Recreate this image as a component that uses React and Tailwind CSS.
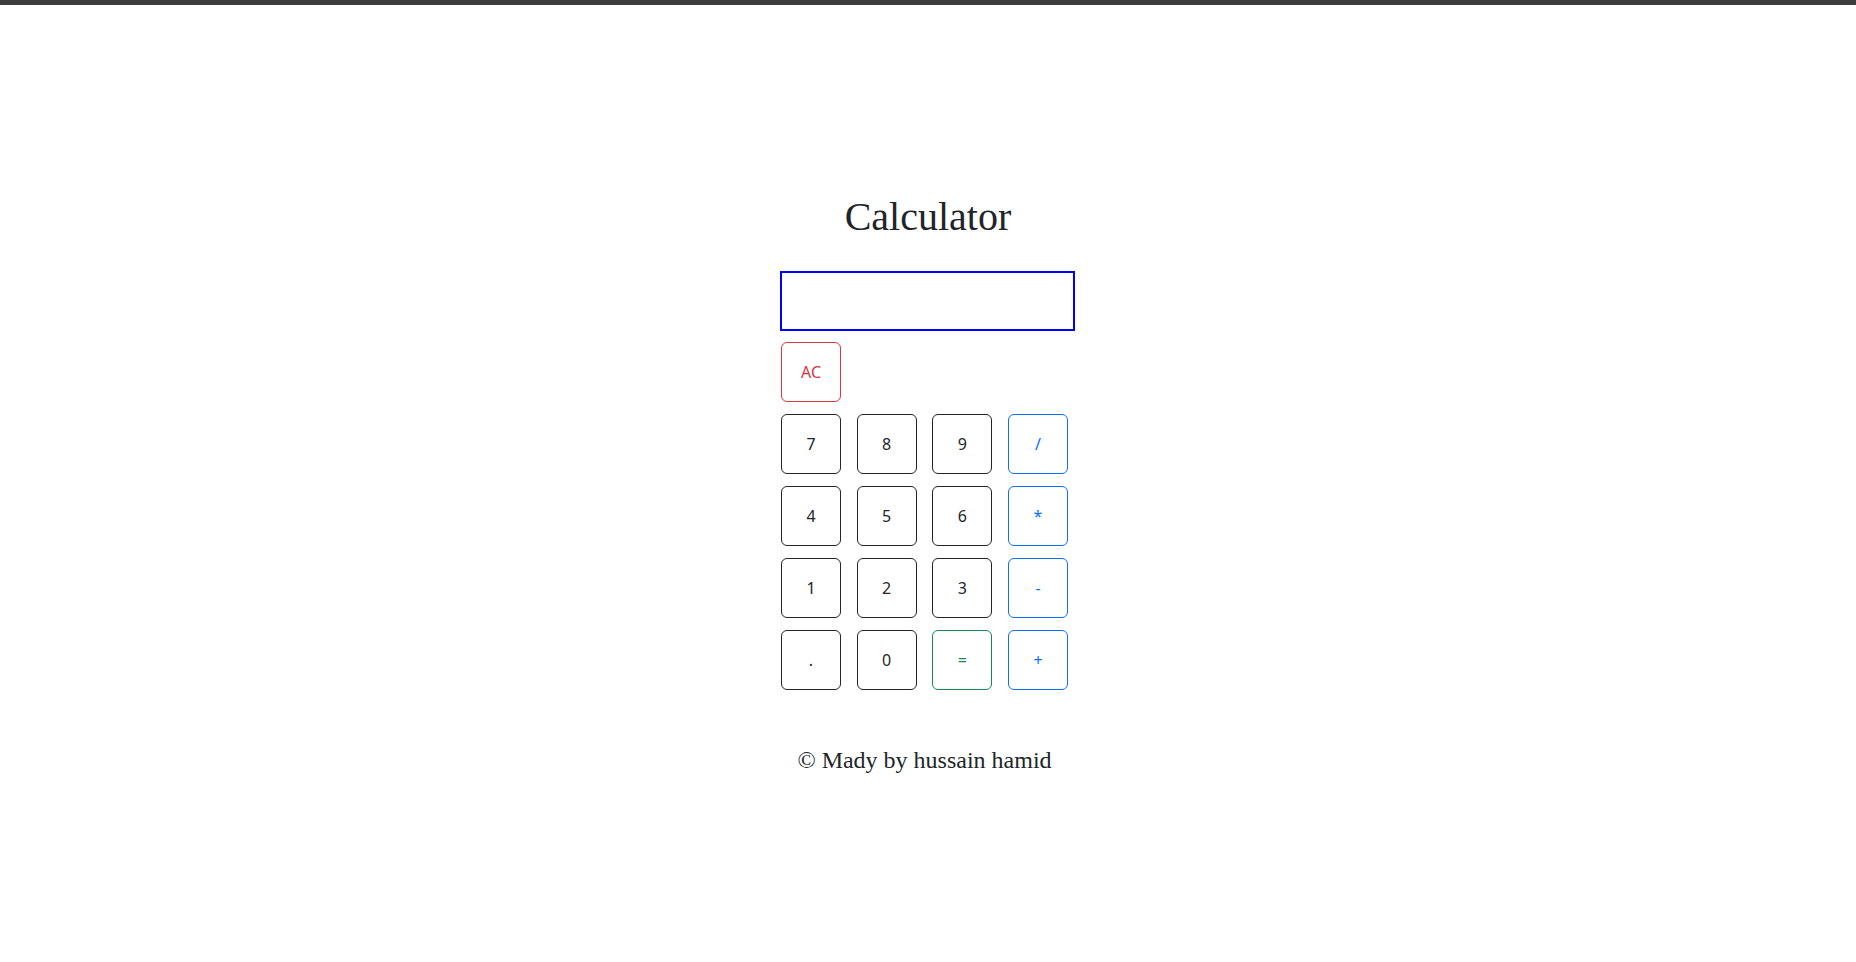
export default function App() {
  const rows = [
    [
      { t: "7" },
      { t: "8" },
      { t: "9" },
      { t: "/", k: "op" },
    ],
    [
      { t: "4" },
      { t: "5" },
      { t: "6" },
      { t: "*", k: "op" },
    ],
    [
      { t: "1" },
      { t: "2" },
      { t: "3" },
      { t: "-", k: "op" },
    ],
    [
      { t: "." },
      { t: "0" },
      { t: "=", k: "eq" },
      { t: "+", k: "op" },
    ],
  ];
  const cls = {
    num: "border-[#212529] text-[#212529]",
    op: "border-[#0d6efd] text-[#0d6efd]",
    eq: "border-[#198754] text-[#198754]",
  };
  return (
    <div className="min-h-[962px] bg-white">
      <div className="h-[5px] bg-[#3c3c3c]" />
      <div className="flex flex-col items-center">
        <h1 className="mt-[188px] text-[40px] leading-[48px] text-[#212529] font-['Liberation_Serif',serif]">
          Calculator
        </h1>
        <div className="mt-[30px] w-[296px] flex flex-col">
          <input
            type="text"
            className="h-[60px] w-[295px] border-2 border-[#0000ff] outline-none"
          />
          <div className="mt-[11px] flex flex-col gap-[12px] pl-[1px] font-['Noto_Sans',sans-serif] text-[16px]">
            <div className="flex">
              <button className="w-[60px] h-[60px] rounded-[6px] border border-[#dc3545] text-[#dc3545]">
                AC
              </button>
            </div>
            {rows.map((r, i) => (
              <div key={i} className="flex gap-[15.67px]">
                {r.map((b, j) => (
                  <button
                    key={j}
                    className={
                      "w-[60px] h-[60px] rounded-[6px] border bg-white " +
                      cls[b.k || "num"]
                    }
                  >
                    {b.t}
                  </button>
                ))}
              </div>
            ))}
          </div>
        </div>
        <p className="mt-[52px] mr-[7px] text-[24px] leading-[36px] text-[#212529] font-['Liberation_Serif',serif]">
          © Mady by hussain hamid
        </p>
      </div>
    </div>
  );
}
